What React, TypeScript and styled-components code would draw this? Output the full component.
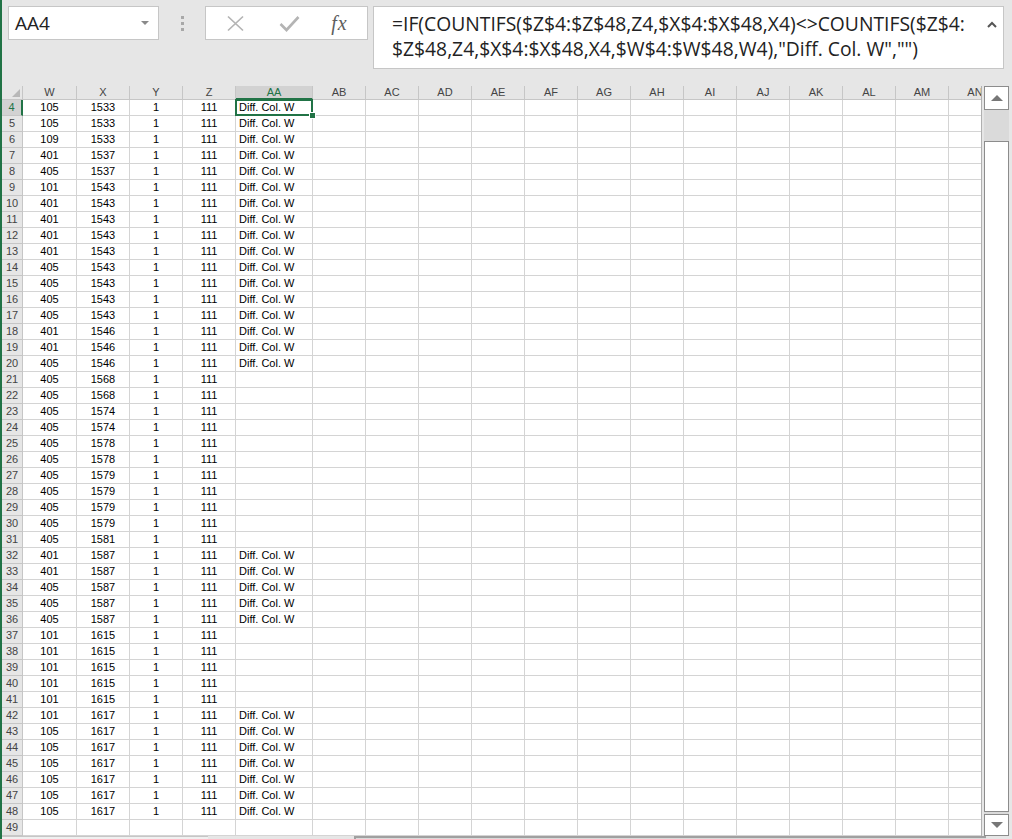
import React from 'react';
import styled, { createGlobalStyle } from 'styled-components';

const GlobalStyle = createGlobalStyle`
  html, body {
    margin: 0;
    padding: 0;
    overflow: hidden;
    background: #e6e6e6;
  }
`;

const green = '#217346';
const gridLine = '#d4d4d4';
const headerLine = '#c6c6c6';

type Row = { n: number; w?: string; x?: string; y?: string; z?: string; diff?: boolean };

const raw: [string, string, boolean][] = [
  ['105', '1533', true], ['105', '1533', true], ['109', '1533', true], ['401', '1537', true],
  ['405', '1537', true], ['101', '1543', true], ['401', '1543', true], ['401', '1543', true],
  ['401', '1543', true], ['401', '1543', true], ['405', '1543', true], ['405', '1543', true],
  ['405', '1543', true], ['405', '1543', true], ['401', '1546', true], ['401', '1546', true],
  ['405', '1546', true], ['405', '1568', false], ['405', '1568', false], ['405', '1574', false],
  ['405', '1574', false], ['405', '1578', false], ['405', '1578', false], ['405', '1579', false],
  ['405', '1579', false], ['405', '1579', false], ['405', '1579', false], ['405', '1581', false],
  ['401', '1587', true], ['401', '1587', true], ['405', '1587', true], ['405', '1587', true],
  ['405', '1587', true], ['101', '1615', false], ['101', '1615', false], ['101', '1615', false],
  ['101', '1615', false], ['101', '1615', false], ['101', '1617', true], ['105', '1617', true],
  ['105', '1617', true], ['105', '1617', true], ['105', '1617', true], ['105', '1617', true],
  ['105', '1617', true],
];

const rows: Row[] = [
  ...raw.map(([w, x, diff], i) => ({ n: i + 4, w, x, y: '1', z: '111', diff })),
  { n: 49 },
];

const columns = ['W', 'X', 'Y', 'Z', 'AA', 'AB', 'AC', 'AD', 'AE', 'AF', 'AG', 'AH', 'AI', 'AJ', 'AK', 'AL', 'AM', 'AN'];
const emptyCols = columns.slice(5);

const Window = styled.div`
  width: 1012px;
  height: 839px;
  box-sizing: border-box;
  border-left: 2px solid ${green};
  background: #e6e6e6;
  display: flex;
  flex-direction: column;
  overflow: hidden;
  font-family: "Liberation Sans", Arial, sans-serif;
`;

const FormulaBar = styled.div`
  display: flex;
  align-items: flex-start;
  height: 86px;
  flex-shrink: 0;
  box-sizing: border-box;
  padding: 6px 8px 0 6px;
`;

const NameBox = styled.div`
  width: 151px;
  height: 34px;
  box-sizing: border-box;
  background: #fff;
  border: 1px solid ${headerLine};
  display: flex;
  align-items: center;
  justify-content: space-between;
  padding: 0 9px 0 6px;
  font-family: "Open Sans", "Noto Sans", sans-serif;
  font-size: 19px;
  color: #222;
`;

const DropArrow = styled.span`
  width: 0;
  height: 0;
  border-left: 4px solid transparent;
  border-right: 4px solid transparent;
  border-top: 4px solid #8a8a8a;
`;

const Grip = styled.div`
  width: 46px;
  height: 34px;
  display: flex;
  flex-direction: column;
  align-items: center;
  justify-content: center;
  gap: 3px;
`;

const GripDot = styled.span`
  width: 3px;
  height: 3px;
  background: #a8a8a8;
`;

const ButtonBox = styled.div`
  width: 163px;
  height: 34px;
  box-sizing: border-box;
  background: #fff;
  border: 1px solid ${headerLine};
  display: flex;
  align-items: center;
  padding-left: 17px;
`;

const IconSlot = styled.span<{ $w: number }>`
  width: ${p => p.$w}px;
  display: flex;
  align-items: center;
  justify-content: center;
`;

const Fx = styled.span`
  font-family: "Liberation Serif", "Times New Roman", serif;
  font-style: italic;
  font-size: 20px;
  color: #5e5e5e;
  letter-spacing: 1px;
`;

const FormulaBox = styled.div`
  margin-left: 5px;
  flex: 1;
  height: 63px;
  box-sizing: border-box;
  background: #fff;
  border: 1px solid ${headerLine};
  display: flex;
  justify-content: space-between;
  padding: 4px 6px 0 18px;
`;

const FormulaText = styled.div`
  font-family: "Open Sans", "Noto Sans", sans-serif;
  font-size: 19.3px;
  line-height: 25px;
  color: #222;
  white-space: nowrap;
`;

const Caret = styled.div`
  display: flex;
  padding-top: 10px;
`;

const Body = styled.div`
  display: flex;
  height: 750px;
  flex-shrink: 0;
`;

const Sheet = styled.div`
  width: 980px;
  overflow: hidden;
  display: grid;
  grid-template-columns: 21px 54px 53px 53px 53px 77px repeat(13, 53px);
  grid-template-rows: 14px repeat(46, 16px);
  background: #fff;
  border-right: 1px solid #b0b0b0;
  box-sizing: border-box;
`;

const Corner = styled.div`
  background: #e6e6e6;
  border-right: 1px solid ${headerLine};
  border-bottom: 1px solid ${headerLine};
  display: flex;
  align-items: flex-end;
  justify-content: flex-end;
  padding: 0 2px 2px 0;
`;

const ColHead = styled.div<{ $sel?: boolean }>`
  box-sizing: border-box;
  background: ${p => (p.$sel ? '#d2d2d2' : '#e6e6e6')};
  color: ${p => (p.$sel ? green : '#444')};
  border-right: 1px solid ${headerLine};
  border-bottom: ${p => (p.$sel ? `2px solid ${green}` : `1px solid ${headerLine}`)};
  font-size: 11px;
  line-height: 13px;
  text-align: center;
  overflow: hidden;
  white-space: nowrap;
`;

const RowHead = styled.div<{ $sel?: boolean }>`
  box-sizing: border-box;
  background: ${p => (p.$sel ? '#d2d2d2' : '#e6e6e6')};
  color: ${p => (p.$sel ? green : '#444')};
  border-right: ${p => (p.$sel ? `2px solid ${green}` : `1px solid ${headerLine}`)};
  border-bottom: 1px solid ${headerLine};
  font-size: 11px;
  line-height: 15px;
  text-align: center;
`;

const Cell = styled.div<{ $align?: 'left' | 'center'; $active?: boolean }>`
  box-sizing: border-box;
  position: relative;
  border-right: 1px solid ${gridLine};
  border-bottom: 1px solid ${gridLine};
  font-size: 11px;
  line-height: 15px;
  color: #000;
  text-align: ${p => p.$align ?? 'center'};
  padding-left: ${p => (p.$align === 'left' ? '3px' : '0')};
  white-space: nowrap;
  overflow: ${p => (p.$active ? 'visible' : 'hidden')};
  ${p =>
    p.$active &&
    `
    z-index: 2;
    &::before {
      content: '';
      position: absolute;
      left: -1px;
      top: -1px;
      right: -1px;
      bottom: -1px;
      border: 2px solid ${green};
    }
    &::after {
      content: '';
      position: absolute;
      right: -4px;
      bottom: -4px;
      width: 5px;
      height: 5px;
      background: ${green};
      border: 1px solid #fff;
    }
  `}
`;

const VScroll = styled.div`
  width: 25px;
  margin-left: 2px;
  display: flex;
  flex-direction: column;
  background: #dadada;
`;

const ScrollBtn = styled.div<{ $h: number }>`
  height: ${p => p.$h}px;
  box-sizing: border-box;
  background: #fff;
  border: 1px solid #8c8c8c;
  display: flex;
  align-items: center;
  justify-content: center;
`;

const Thumb = styled.div`
  flex: 1;
  margin: 31px 0 2px;
  background: #fff;
  border: 1px solid #8c8c8c;
`;

const Tri = styled.span<{ $up?: boolean }>`
  width: 0;
  height: 0;
  border-left: 6px solid transparent;
  border-right: 6px solid transparent;
  ${p => (p.$up ? 'border-bottom: 6px solid #777;' : 'border-top: 6px solid #777;')}
`;

const Footer = styled.div`
  display: flex;
  height: 24px;
  flex-shrink: 0;
`;

const TabArea = styled.div`
  width: 206px;
  background: #f0f0f0;
  border-top: 1px solid ${headerLine};
`;

const FooterGap = styled.div`
  width: 146px;
`;

const HScroll = styled.div`
  width: 630px;
  background: #dadada;
  border-top: 2px solid #a0a0a0;
  border-left: 2px solid #a0a0a0;
`;

const App: React.FC = () => {
  return (
    <>
      <GlobalStyle />
      <Window>
        <FormulaBar>
          <NameBox>
            <span>AA4</span>
            <DropArrow />
          </NameBox>
          <Grip>
            <GripDot />
            <GripDot />
            <GripDot />
          </Grip>
          <ButtonBox>
            <IconSlot $w={24}>
              <svg width="19" height="17" viewBox="0 0 19 17">
                <path d="M2 1.5 L17 15.5 M17 1.5 L2 15.5" stroke="#b4b4b4" strokeWidth="1.7" fill="none" />
              </svg>
            </IconSlot>
            <IconSlot $w={84}>
              <svg width="21" height="17" viewBox="0 0 21 17">
                <path d="M1.5 9 L7.5 15 L19.5 2" stroke="#b4b4b4" strokeWidth="2.6" fill="none" />
              </svg>
            </IconSlot>
            <IconSlot $w={17}>
              <Fx>fx</Fx>
            </IconSlot>
          </ButtonBox>
          <FormulaBox>
            <FormulaText>
              <div>=IF(COUNTIFS($Z$4:$Z$48,Z4,$X$4:$X$48,X4)&lt;&gt;COUNTIFS($Z$4:</div>
              <div>$Z$48,Z4,$X$4:$X$48,X4,$W$4:$W$48,W4),"Diff. Col. W","")</div>
            </FormulaText>
            <Caret>
              <svg width="10" height="7" viewBox="0 0 10 7">
                <path d="M1 6 L5 2 L9 6" stroke="#555" strokeWidth="2" fill="none" />
              </svg>
            </Caret>
          </FormulaBox>
        </FormulaBar>

        <Body>
          <Sheet>
            <Corner>
              <svg width="8" height="8" viewBox="0 0 8 8">
                <polygon points="8,0 8,8 0,8" fill="#b8b8b8" />
              </svg>
            </Corner>
            {columns.map(c => (
              <ColHead key={c} $sel={c === 'AA'}>
                {c}
              </ColHead>
            ))}
            {rows.map(r => (
              <React.Fragment key={r.n}>
                <RowHead $sel={r.n === 4}>{r.n}</RowHead>
                <Cell>{r.w}</Cell>
                <Cell>{r.x}</Cell>
                <Cell>{r.y}</Cell>
                <Cell>{r.z}</Cell>
                <Cell $align="left" $active={r.n === 4}>
                  {r.diff ? 'Diff. Col. W' : ''}
                </Cell>
                {emptyCols.map(c => (
                  <Cell key={c} />
                ))}
              </React.Fragment>
            ))}
          </Sheet>
          <VScroll>
            <ScrollBtn $h={24}>
              <Tri $up />
            </ScrollBtn>
            <Thumb />
            <ScrollBtn $h={22}>
              <Tri />
            </ScrollBtn>
          </VScroll>
        </Body>

        <Footer>
          <TabArea />
          <FooterGap />
          <HScroll />
        </Footer>
      </Window>
    </>
  );
};

export default App;
